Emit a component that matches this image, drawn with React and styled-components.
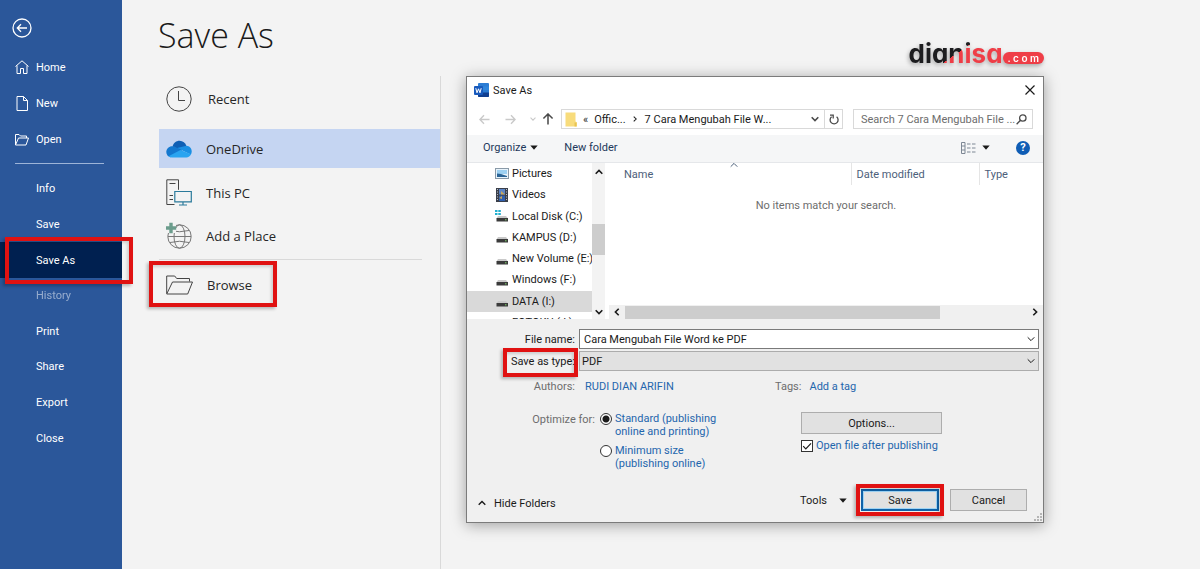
import React, { useState } from 'react';
import styled, { createGlobalStyle, css } from 'styled-components';

const GlobalStyle = createGlobalStyle`
  * {
    box-sizing: border-box;
  }
  body {
    margin: 0;
    background-color: #f3f3f3;
    font-family: Roboto, "Open Sans", sans-serif;
    font-size: 11px;
    line-height: 13px;
    color: #1a1a1a;
  }
  button, input, select {
    font: inherit;
    color: inherit;
  }
  button {
    padding: 0;
    border: none;
    background: none;
    cursor: pointer;
  }
  ul {
    list-style: none;
    margin: 0;
    padding: 0;
  }
  a {
    color: inherit;
    text-decoration: none;
  }
  svg {
    display: block;
    flex: none;
  }
`;

// red frame that points at a step of the tutorial
const marked = css`
  position: relative;
  &::after {
    content: "";
    position: absolute;
    inset: ${props => props.$mark};
    border: 4px solid #e01212;
    box-shadow: -2px 2px 3px rgba(0, 0, 0, 0.25), inset -2px 2px 3px rgba(0, 0, 0, 0.15);
    pointer-events: none;
    z-index: 2;
  }
`;

const Page = styled.div`
  display: flex;
  min-height: 100vh;
`;

/* ---------- left menu ---------- */

const Sidebar = styled.nav`
  flex: none;
  width: 122px;
  padding-top: 18px;
  background-color: #2b579a;
  color: white;
`;

const BackButton = styled.button`
  display: block;
  margin: 0 0 0 12px;
  color: white;
`;

const MenuList = styled.ul`
  display: flex;
  flex-direction: column;
  min-height: ${props => props.$height}px;
  margin-top: ${props => props.$top}px;
`;

const MenuItem = styled.li`
  display: flex;
  flex: 1;
  background-color: ${props => (props.$active ? '#002050' : 'transparent')};
  opacity: ${props => (props.$disabled ? 0.5 : 1)};
  ${props => props.$mark && marked}
`;

const MenuLink = styled.a`
  display: flex;
  align-items: center;
  flex: 1;
  gap: 7px;
  padding-left: ${props => (props.$icon ? 15 : 36)}px;
`;

const MenuDivider = styled.hr`
  width: 89px;
  margin: 6px 0 0 15px;
  border: none;
  border-top: 1px solid #9db4d8;
`;

/* ---------- backstage ---------- */

const Main = styled.main`
  flex: 1;
  min-width: 0;
  display: flex;
  flex-direction: column;
`;

const Header = styled.header`
  display: flex;
  justify-content: space-between;
  align-items: flex-start;
  height: 76px;
  padding: 10px 156px 0 36px;
`;

const Title = styled.h1`
  margin: 0;
  font-family: "Open Sans", sans-serif;
  font-size: 34px;
  font-weight: 300;
  line-height: 50px;
`;

const Logo = styled.a`
  display: flex;
  align-items: flex-end;
  padding-top: 28px;
  filter: drop-shadow(-1px 2px 2px rgba(0, 0, 0, 0.3));
`;

const LogoName = styled.span`
  font-family: Inter, sans-serif;
  font-size: 26px;
  font-weight: 700;
  line-height: 32px;
  font-feature-settings: "cv11";
  color: transparent;
  background: linear-gradient(145deg, #1d1d1f 50%, #ef3e47 50%);
  background-clip: text;
  -webkit-background-clip: text;
`;

const LogoDomain = styled.span`
  margin-bottom: 6px;
  padding: 0 5px;
  border-radius: 6px;
  background-color: #ef3e47;
  color: white;
  font-family: Inter, sans-serif;
  font-size: 10px;
  font-weight: 600;
  line-height: 12px;
`;

const Content = styled.div`
  display: flex;
  align-items: flex-start;
  flex: 1;
`;

const Places = styled.ul`
  flex: none;
  align-self: stretch;
  width: 319px;
  padding: 3px 0 0 37px;
  border-right: 1px solid #d9d9d9;
`;

const Place = styled.li`
  display: flex;
  height: ${props => props.$height}px;
  margin-bottom: ${props => props.$after || 0}px;
  background-color: ${props => (props.$active ? '#c5d5f2' : 'transparent')};
`;

const PlaceButton = styled.button`
  display: flex;
  align-items: center;
  flex: 1;
  gap: ${props => props.$gap || 14}px;
  padding-left: 7px;
  font-family: "Open Sans", sans-serif;
  font-size: 13px;
  line-height: 18px;
  color: #262626;
  ${props => props.$mark && marked}
`;

const PlaceDivider = styled.li`
  height: 1px;
  margin: 2px 18px 3px 0;
  background-color: #d9d9d9;
`;

/* ---------- dialog ---------- */

const DialogArea = styled.div`
  flex: 1;
  min-width: 0;
  padding: 0 156px 0 25px;
`;

const Dialog = styled.section`
  position: relative;
  border: 1px solid #7b7b7b;
  background-color: #f0f0f0;
  box-shadow: 0 2px 14px rgba(0, 0, 0, 0.35);
`;

const TitleBar = styled.div`
  display: flex;
  align-items: center;
  height: 26px;
  padding: 0 8px 0 7px;
  gap: 4px;
  background-color: white;
`;

const DialogTitle = styled.h2`
  flex: 1;
  margin: 0;
  font-size: 11px;
  font-weight: 400;
`;

const NavBar = styled.div`
  display: flex;
  align-items: center;
  height: 32px;
  padding: 0 10px 0 11px;
  background-color: white;
`;

const NavButton = styled.button`
  display: flex;
  justify-content: center;
  width: ${props => props.$width}px;
  color: ${props => (props.$dim ? '#c9c9c9' : '#4a4a4a')};
`;

const AddressBar = styled.div`
  display: flex;
  align-items: center;
  flex: 1;
  height: 20px;
  padding-left: 3px;
  border: 1px solid #d9d9d9;
`;

const Crumb = styled.button`
  margin-left: ${props => props.$left}px;
  white-space: nowrap;
`;

const AddressEnd = styled.div`
  display: flex;
  align-items: center;
  align-self: stretch;
  margin-left: auto;
`;

const RefreshButton = styled.button`
  display: flex;
  align-items: center;
  justify-content: center;
  align-self: stretch;
  width: 18px;
  border-left: 1px solid #d9d9d9;
  color: #4a4a4a;
`;

const SearchBox = styled.label`
  display: flex;
  align-items: center;
  flex: none;
  width: 180px;
  height: 20px;
  margin-left: 10px;
  padding: 0 5px 0 7px;
  border: 1px solid #d9d9d9;
`;

const SearchInput = styled.input`
  flex: 1;
  min-width: 0;
  padding: 0;
  border: none;
  outline: none;
  background: none;
  &::placeholder {
    color: #6d6d6d;
    opacity: 1;
  }
`;

const Toolbar = styled.div`
  display: flex;
  align-items: center;
  height: 28px;
  padding: 0 13px 2px 16px;
  border-bottom: 1px solid #e5e7ea;
  background-color: #f5f6f7;
  color: #1e395b;
`;

const ToolButton = styled.button`
  display: flex;
  align-items: center;
  gap: ${props => props.$gap || 4}px;
  margin-right: ${props => props.$after || 0}px;
`;

const Push = styled.span`
  flex: 1;
`;

const HelpButton = styled.button`
  width: 14px;
  height: 14px;
  border-radius: 50%;
  background-color: #0f5db5;
  color: white;
  font-weight: 700;
  line-height: 14px;
`;

const Browser = styled.div`
  display: flex;
  height: 156px;
  overflow: hidden;
  background-color: white;
`;

const TreePane = styled.div`
  display: flex;
  flex: none;
  width: 138px;
`;

const Tree = styled.ul`
  flex: 1;
  min-width: 0;
  display: flex;
  flex-direction: column;
  height: 170px;
`;

const TreeItem = styled.li`
  display: flex;
  align-items: center;
  flex: 1;
  gap: 3px;
  padding-left: 28px;
  white-space: nowrap;
  overflow: hidden;
  background-color: ${props => (props.$active ? '#d9d9d9' : 'transparent')};
`;

const ScrollY = styled.div`
  display: flex;
  flex-direction: column;
  align-items: center;
  justify-content: space-between;
  width: 13px;
  padding: 5px 0 3px;
  background-color: #f3f3f3;
`;

const ThumbY = styled.div`
  width: 13px;
  height: 31px;
  margin-bottom: 6px;
  background-color: #cdcdcd;
`;

const FilePane = styled.div`
  display: flex;
  flex-direction: column;
  flex: 1;
  min-width: 0;
  margin-left: 4px;
`;

const FileTable = styled.table`
  width: 100%;
  border-collapse: collapse;
  table-layout: fixed;
  color: #4c607a;
`;

const HeadCell = styled.th`
  position: relative;
  width: ${props => (props.$width ? props.$width + 'px' : 'auto')};
  height: 22px;
  padding: 0 0 0 ${props => props.$left || 5}px;
  border-right: ${props => (props.$last ? 'none' : '1px solid #e5e5e5')};
  font-weight: 400;
  text-align: left;
`;

const SortMark = styled.span`
  position: absolute;
  top: -2px;
  left: 50%;
`;

const EmptyCell = styled.td`
  height: 41px;
  padding: 0;
  color: #6d6d6d;
  text-align: center;
`;

const ScrollX = styled.div`
  display: flex;
  align-items: center;
  height: 14px;
  margin-top: auto;
  padding: 0 4px;
  background-color: #f0f0f0;
`;

const ThumbX = styled.div`
  width: 74%;
  height: 13px;
  margin: 0 auto 0 4px;
  background-color: #cdcdcd;
`;

/* ---------- form below the file list ---------- */

const Form = styled.form`
  padding: 10px 4px 0 0;
`;

const FieldRow = styled.div`
  display: grid;
  grid-template-columns: 112px 1fr;
  align-items: center;
  margin-bottom: 2px;
`;

const FieldLabel = styled.label`
  justify-self: end;
  padding-right: 4px;
  color: ${props => (props.$dim ? '#6d6d6d' : 'inherit')};
  ${props => props.$mark && marked}
`;

const Combo = styled.div`
  display: flex;
  align-items: center;
  height: 20px;
  padding-right: 3px;
  border: 1px solid ${props => (props.$grey ? '#acacac' : '#7a7a7a')};
  background-color: ${props => (props.$grey ? '#e1e1e1' : 'white')};
`;

const ComboInput = styled.input`
  flex: 1;
  min-width: 0;
  padding: 0 4px;
  border: none;
  outline: none;
  background: none;
`;

const ComboSelect = styled.select`
  flex: 1;
  min-width: 0;
  padding: 0 2px;
  border: none;
  outline: none;
  background: none;
  appearance: none;
`;

const Meta = styled.div`
  display: grid;
  grid-template-columns: 112px 190px 1fr;
  align-items: center;
  margin-top: 9px;
`;

const MetaLink = styled.a`
  padding-left: ${props => props.$left}px;
  color: #1f66ad;
`;

const TagCell = styled.div`
  padding-left: 6px;
  color: #6d6d6d;
`;

const Settings = styled.div`
  display: grid;
  grid-template-columns: 133px 201px 1fr;
  align-items: start;
  margin-top: 19px;
`;

const OptimizeLabel = styled.span`
  justify-self: end;
  padding: 1px 5px 0 0;
  color: #6d6d6d;
`;

const RadioLabel = styled.label`
  display: flex;
  gap: 3px;
  width: 120px;
  margin-bottom: 6px;
  color: #1f66ad;
`;

const Radio = styled.input`
  appearance: none;
  flex: none;
  width: 12px;
  height: 12px;
  margin: 1px 0 0;
  border: 1px solid #333333;
  border-radius: 50%;
  background-color: white;
  &:checked {
    background: radial-gradient(circle, #1a1a1a 3px, white 4px);
  }
`;

const CheckLabel = styled.label`
  display: flex;
  align-items: center;
  gap: 3px;
  margin-top: 5px;
  color: #1f66ad;
`;

const CheckBox = styled.span`
  display: grid;
  flex: none;
  width: 12px;
  height: 12px;
  border: 1px solid #333333;
  background-color: white;
  & > * {
    grid-area: 1 / 1;
  }
`;

const CheckInput = styled.input`
  appearance: none;
  width: 10px;
  height: 10px;
  margin: 0;
  &:not(:checked) + svg {
    visibility: hidden;
  }
`;

const PushButton = styled.button`
  width: ${props => props.$width}px;
  height: 22px;
  border: 1px solid #adadad;
  background-color: #e1e1e1;
  ${props => props.$primary && css`
    border: 2px solid #0f62a8;
    box-shadow: inset 0 0 0 1px #9fd4f5;
  `}
  ${props => props.$mark && marked}
`;

const Footer = styled.div`
  display: flex;
  align-items: center;
  margin-top: 13px;
  padding: 0 12px 11px 11px;
`;

const HideFolders = styled.button`
  display: flex;
  align-items: center;
  gap: 8px;
  margin: 6px auto 0 0;
`;

const ToolsButton = styled.button`
  display: flex;
  align-items: center;
  gap: 12px;
  margin-right: 14px;
`;

const FooterButtons = styled.div`
  display: flex;
  gap: 11px;
`;

const Grip = styled.svg`
  position: absolute;
  right: 1px;
  bottom: 1px;
`;

/* ---------- icons ---------- */

const BackIcon = () => (
  <svg width="20" height="20" viewBox="0 0 20 20" fill="none" stroke="currentColor" strokeWidth="1.3">
    <circle cx="10" cy="10" r="9" />
    <path d="M15 10H5.500M9 6.300 5.300 10 9 13.700" />
  </svg>
);

const HomeIcon = () => (
  <svg width="14" height="14" viewBox="0 0 14 14" fill="none" stroke="currentColor">
    <path d="M.5 6.500 7 .8l6.500 5.700M2 5.500v8h3.500V8.500h3v5H12v-8" />
  </svg>
);

const NewIcon = () => (
  <svg width="14" height="15" viewBox="0 0 14 15" fill="none" stroke="currentColor">
    <path d="M2 .5h6.500L12.500 4.500v10H2zM8.500.5v4h4" />
  </svg>
);

const OpenIcon = () => (
  <svg width="14" height="12" viewBox="0 0 14 12" fill="none" stroke="currentColor">
    <path d="M.5 11V.5H4l1.500 1.500h6v2M.5 11 3.500 4h10L11 11z" />
  </svg>
);

const ClockIcon = () => (
  <svg width="26" height="26" viewBox="0 0 26 26" fill="none" stroke="#444">
    <circle cx="13" cy="13" r="12.200" />
    <path d="M12.500 5v9.500H19" />
  </svg>
);

const CloudIcon = () => (
  <svg width="26" height="18" viewBox="0 0 26 18">
    <path d="M6.500 6.500C7.500 2.800 10.300.7 13.500.7c3.400 0 6 2.100 6.900 5.300L15 11z" fill="#0f5fb4" />
    <path d="M4.500 17.300C2 16.800.3 14.600.3 12c0-3.200 2.600-5.700 5.900-5.700 1.600 0 2.900.5 4.100 1.200L17 11.500z" fill="#1478cf" />
    <path d="M11 8l9.400-2.200c3.100.1 5.300 2.700 5.300 5.700 0 1.200-.3 2.200-.9 3.100z" fill="#1a8fe3" />
    <path d="M2.500 16.200 14.500 9.900l10.600 4.300c-.9 1.900-2.700 3.200-4.800 3.200H6c-1.400 0-2.600-.4-3.500-1.200z" fill="#2aa4f0" />
  </svg>
);

const PcIcon = () => (
  <svg width="26" height="27" viewBox="0 0 26 27" fill="none" stroke="#444">
    <path d="M8.500 25.500H.8V.8h11.700v10M3.500 4.500h6M3.500 16.500H7M3.500 20.500H7" />
    <path d="M8.800 12.500h16.500v10.300H8.800zM17 23v2.800M13 26h8" stroke="#2b7a9b" strokeWidth="1.200" fill="#f3f3f3" />
  </svg>
);

const GlobeIcon = () => (
  <svg width="26" height="28" viewBox="0 0 26 28" fill="none" stroke="#777">
    <circle cx="13.500" cy="14.500" r="11.700" />
    <ellipse cx="13.500" cy="14.500" rx="5.500" ry="11.700" />
    <path d="M2 14.500h23M4 8.500q9.500 2.500 19 0M4 20.500q9.500-2.500 19 0" />
    <path d="M0 1h10v10H0z" fill="#f3f3f3" stroke="none" />
    <path d="M5 .8v10.400M-.2 6h10.400" stroke="#6b9c8c" strokeWidth="3.400" />
  </svg>
);

const BrowseIcon = () => (
  <svg width="27" height="20" viewBox="0 0 27 20" fill="none" stroke="#444">
    <path d="M.7 18.500V1h8l2 2.500h12.800v3M.7 19 6.500 7h20l-4.800 12z" />
  </svg>
);

const WordIcon = () => (
  <svg width="15" height="14" viewBox="0 0 15 14">
    <rect x="4" width="11" height="14" rx="1" fill="#2b7cd3" />
    <path d="M4 3.500h11V7H4z" fill="#2f86dc" />
    <path d="M4 9.500h11V13q0 1-1 1H5q-1 0-1-1z" fill="#103f91" />
    <rect y="3" width="9" height="9" rx="1" fill="#185abd" />
    <path d="M1.800 5.200 3 9.800l1.500-4 1.500 4 1.200-4.600" fill="none" stroke="white" />
  </svg>
);

const CloseIcon = () => (
  <svg width="10" height="10" viewBox="0 0 10 10" stroke="#1a1a1a" strokeWidth="1.200">
    <path d="M.5.5l9 9M9.500.5l-9 9" />
  </svg>
);

const Arrow = ({ turn = 0, size = 11 }) => (
  <svg width={size} height={size} viewBox="0 0 11 11" fill="none" stroke="currentColor" strokeWidth="1.400">
    <g transform={`rotate(${turn} 5.500 5.500)`}>
      <path d="M10.500 5.500H1M5 1.300.9 5.500 5 9.700" />
    </g>
  </svg>
);

// points down when turn is 0
const Chevron = ({ turn = 0, size = 8, color = 'currentColor', weight = 1.4 }) => (
  <svg width={size} height={size} viewBox="0 0 8 8" fill="none" stroke={color} strokeWidth={weight}>
    <path d="M.7 2.300 4 5.600l3.300-3.300" transform={`rotate(${turn} 4 4)`} />
  </svg>
);

const Caret = () => (
  <svg width="8" height="5" viewBox="0 0 8 5">
    <path d="M.3.500h7.400L4 4.700z" fill="#1a1a1a" />
  </svg>
);

const FolderIcon = () => (
  <svg width="12" height="15" viewBox="0 0 12 15">
    <path d="M.5.500h10v9l1.500 1v4H.5z" fill="#f8dc7c" />
    <path d="M9.500 10.500h2v4h-2z" fill="#e8c454" />
  </svg>
);

const RefreshIcon = () => (
  <svg width="10" height="11" viewBox="0 0 10 11" fill="none" stroke="currentColor" strokeWidth="1.300">
    <path d="M7.600 2.800a4 4 0 1 1-5 0M1 1.200h3.200v3.300" />
  </svg>
);

const SearchIcon = () => (
  <svg width="11" height="11" viewBox="0 0 11 11" fill="none" stroke="#4a4a4a" strokeWidth="1.300">
    <circle cx="6.800" cy="4" r="3.200" />
    <path d="M4.500 6.300.6 10.300" />
  </svg>
);

const ViewIcon = () => (
  <svg width="15" height="12" viewBox="0 0 15 12" fill="none" stroke="#7d8794">
    <path d="M.5.500h3.500v11H.5zM.5 4h3.500M.5 8h3.500" />
    <path d="M6 2h3.500M11 2h3.500M6 6h3.500M11 6h3.500M6 10h3.500M11 10h3.500" />
  </svg>
);

const PictureIcon = () => (
  <svg width="14" height="11" viewBox="0 0 14 11">
    <rect x=".5" y=".5" width="13" height="10" fill="#e8f3fb" stroke="#8a9aa8" />
    <path d="M2 2h10v4H2z" fill="#9cd0f2" />
    <path d="M2 9V5.500l4 .5 6 2v1z" fill="#2a6496" />
  </svg>
);

const VideoIcon = () => (
  <svg width="14" height="14" viewBox="0 0 14 14">
    <rect x="1" width="12" height="14" fill="#3a3f4a" />
    <path d="M4 1h6v5.500H4z" fill="#5b84c4" />
    <path d="M4 7.500h6V13H4z" fill="#2f5fae" />
    <path d="M6 3l4 3.500H6zM4 10l3-2v3z" fill="#c9a75a" />
    <path d="M2.500 1v12M11.500 1v12" stroke="#b8bec8" strokeDasharray="1 1.500" />
  </svg>
);

const DriveIcon = ({ system }) => (
  <svg width="14" height="14" viewBox="0 0 14 14">
    {system && <path d="M0 1h2.500v2H0zM3.300 1h2.500v2H3.300zM0 4h2.500v2H0zM3.300 4h2.500v2H3.300z" fill="#22b0cf" />}
    <path d="M3 7h8l2 2.500H1.500z" fill="#c9c9c9" />
    <rect x="1.500" y="9" width="11.500" height="3.500" fill="#3b3b3b" />
    <path d="M10 10.800h1.500" stroke="#7fd66b" />
  </svg>
);

const CheckIcon = () => (
  <svg width="10" height="10" viewBox="0 0 10 10" fill="none" stroke="#1a1a1a" strokeWidth="1.200">
    <path d="M1.200 5.200 3.800 7.800 9 2.300" />
  </svg>
);

/* ---------- data ---------- */

const topMenu = [
  { name: 'Home', icon: <HomeIcon /> },
  { name: 'New', icon: <NewIcon /> },
  { name: 'Open', icon: <OpenIcon /> },
];

const menu = ['Info', 'Save', 'Save As', 'History', 'Print', 'Share', 'Export', 'Close'];

const tree = [
  { name: 'Pictures', icon: <PictureIcon /> },
  { name: 'Videos', icon: <VideoIcon /> },
  { name: 'Local Disk (C:)', icon: <DriveIcon system /> },
  { name: 'KAMPUS (D:)', icon: <DriveIcon /> },
  { name: 'New Volume (E:)', icon: <DriveIcon /> },
  { name: 'Windows (F:)', icon: <DriveIcon /> },
  { name: 'DATA (I:)', icon: <DriveIcon /> },
  { name: 'FOTOKU (J:)', icon: <DriveIcon /> },
];

function SideMenu() {
  return (
    <Sidebar>
      <BackButton aria-label="Back"><BackIcon /></BackButton>
      <MenuList $height={108} $top={11}>
        {topMenu.map(item => (
          <MenuItem key={item.name}>
            <MenuLink href="#" $icon>{item.icon}{item.name}</MenuLink>
          </MenuItem>
        ))}
      </MenuList>
      <MenuDivider />
      <MenuList $height={285} $top={7}>
        {menu.map(name => (
          <MenuItem
            key={name}
            $active={name === 'Save As'}
            $disabled={name === 'History'}
            $mark={name === 'Save As' && '-5px -11px -6px 5px'}
          >
            <MenuLink href="#">{name}</MenuLink>
          </MenuItem>
        ))}
      </MenuList>
    </Sidebar>
  );
}

function PlaceList() {
  return (
    <Places>
      <Place $height={40} $after={10}><PlaceButton $gap={16}><ClockIcon />Recent</PlaceButton></Place>
      <Place $height={39} $after={3} $active><PlaceButton><CloudIcon />OneDrive</PlaceButton></Place>
      <Place $height={43}><PlaceButton><PcIcon />This PC</PlaceButton></Place>
      <Place $height={43}><PlaceButton><GlobeIcon />Add a Place</PlaceButton></Place>
      <PlaceDivider />
      <Place $height={43}><PlaceButton $mark="-2px 163px -1px -10px"><BrowseIcon />Browse</PlaceButton></Place>
    </Places>
  );
}

function SaveDialog() {
  const [fileName, setFileName] = useState('Cara Mengubah File Word ke PDF');
  const [size, setSize] = useState('standard');
  const [openAfter, setOpenAfter] = useState(true);

  return (
    <Dialog role="dialog" aria-label="Save As">
      <TitleBar>
        <WordIcon />
        <DialogTitle>Save As</DialogTitle>
        <button aria-label="Close"><CloseIcon /></button>
      </TitleBar>

      <NavBar>
        <NavButton $width={13} $dim aria-label="Back"><Arrow /></NavButton>
        <NavButton $width={39} $dim aria-label="Forward"><Arrow turn={180} /></NavButton>
        <NavButton $width={5} $dim aria-label="Recent locations"><Chevron size={6} /></NavButton>
        <NavButton $width={26} aria-label="Up"><Arrow turn={90} size={12} /></NavButton>
        <AddressBar>
          <FolderIcon />
          <Crumb $left={6}>«</Crumb>
          <Crumb $left={6}>Offic...</Crumb>
          <Crumb $left={6} aria-label="Expand"><Chevron turn={-90} size={6} /></Crumb>
          <Crumb $left={7}>7 Cara Mengubah File W...</Crumb>
          <AddressEnd>
            <NavButton $width={18} aria-label="Previous locations"><Chevron weight={1.6} /></NavButton>
            <RefreshButton aria-label="Refresh"><RefreshIcon /></RefreshButton>
          </AddressEnd>
        </AddressBar>
        <SearchBox>
          <SearchInput aria-label="Search" placeholder="Search 7 Cara Mengubah File ..." />
          <SearchIcon />
        </SearchBox>
      </NavBar>

      <Toolbar>
        <ToolButton $after={26}>Organize<Caret /></ToolButton>
        <ToolButton>New folder</ToolButton>
        <Push />
        <ToolButton $gap={6} $after={26} aria-label="Change view"><ViewIcon /><Caret /></ToolButton>
        <HelpButton aria-label="Help">?</HelpButton>
      </Toolbar>

      <Browser>
        <TreePane>
          <Tree>
            {tree.map(item => (
              <TreeItem key={item.name} $active={item.name === 'DATA (I:)'}>{item.icon}{item.name}</TreeItem>
            ))}
          </Tree>
          <ScrollY>
            <Chevron turn={180} weight={1.6} />
            <ThumbY />
            <Chevron weight={1.6} />
          </ScrollY>
        </TreePane>
        <FilePane>
          <FileTable>
            <thead>
              <tr>
                <HeadCell $left={15}>Name<SortMark><Chevron turn={180} size={8} weight={1} /></SortMark></HeadCell>
                <HeadCell $width={128}>Date modified</HeadCell>
                <HeadCell $width={64} $last>Type</HeadCell>
              </tr>
            </thead>
            <tbody>
              <tr>
                <EmptyCell colSpan={3}>No items match your search.</EmptyCell>
              </tr>
            </tbody>
          </FileTable>
          <ScrollX>
            <Chevron turn={90} weight={1.6} />
            <ThumbX />
            <Chevron turn={-90} weight={1.6} />
          </ScrollX>
        </FilePane>
      </Browser>

      <Form onSubmit={e => e.preventDefault()}>
        <FieldRow>
          <FieldLabel htmlFor="fileName">File name:</FieldLabel>
          <Combo>
            <ComboInput id="fileName" value={fileName} onChange={e => setFileName(e.target.value)} />
            <Chevron weight={1} />
          </Combo>
        </FieldRow>
        <FieldRow>
          <FieldLabel htmlFor="saveType" $mark="-7px 1px -9px -8px">Save as type:</FieldLabel>
          <Combo $grey>
            <ComboSelect id="saveType">
              <option>PDF</option>
            </ComboSelect>
            <Chevron weight={1} />
          </Combo>
        </FieldRow>

        <Meta>
          <FieldLabel as="span" $dim>Authors:</FieldLabel>
          <MetaLink href="#" $left={6}>RUDI DIAN ARIFIN</MetaLink>
          <TagCell>Tags:<MetaLink href="#" $left={8}>Add a tag</MetaLink></TagCell>
        </Meta>

        <Settings>
          <OptimizeLabel>Optimize for:</OptimizeLabel>
          <div role="radiogroup" aria-label="Optimize for">
            <RadioLabel>
              <Radio type="radio" name="size" checked={size === 'standard'} onChange={() => setSize('standard')} />
              Standard (publishing online and printing)
            </RadioLabel>
            <RadioLabel>
              <Radio type="radio" name="size" checked={size === 'minimum'} onChange={() => setSize('minimum')} />
              Minimum size (publishing online)
            </RadioLabel>
          </div>
          <div>
            <PushButton type="button" $width={141}>Options...</PushButton>
            <CheckLabel>
              <CheckBox>
                <CheckInput type="checkbox" checked={openAfter} onChange={e => setOpenAfter(e.target.checked)} />
                <CheckIcon />
              </CheckBox>
              Open file after publishing
            </CheckLabel>
          </div>
        </Settings>

        <Footer>
          <HideFolders type="button"><Chevron turn={180} />Hide Folders</HideFolders>
          <ToolsButton type="button">Tools<Caret /></ToolsButton>
          <FooterButtons>
            <PushButton type="submit" $width={78} $primary $mark="-7px">Save</PushButton>
            <PushButton type="button" $width={77}>Cancel</PushButton>
          </FooterButtons>
        </Footer>
      </Form>

      <Grip width="8" height="8" viewBox="0 0 8 8" fill="#b5b5b5">
        <path d="M6 0h2v2H6zM3 3h2v2H3zM6 3h2v2H6zM0 6h2v2H0zM3 6h2v2H3zM6 6h2v2H6z" />
      </Grip>
    </Dialog>
  );
}

const App = () => (
  <Page>
    <GlobalStyle />
    <SideMenu />
    <Main>
      <Header>
        <Title>Save As</Title>
        <Logo href="#">
          <LogoName>dianisa</LogoName>
          <LogoDomain>. c o m</LogoDomain>
        </Logo>
      </Header>
      <Content>
        <PlaceList />
        <DialogArea>
          <SaveDialog />
        </DialogArea>
      </Content>
    </Main>
  </Page>
);

export default App;
